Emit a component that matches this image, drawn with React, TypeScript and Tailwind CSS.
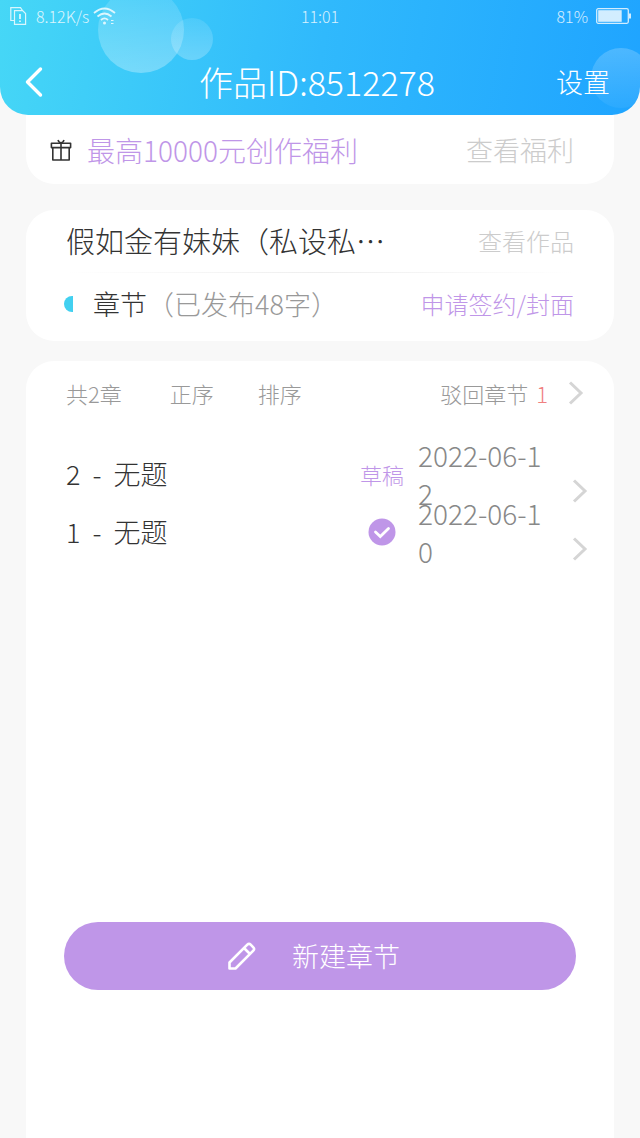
interface Chapter {
  id: number;
  title: string;
  date: string;
  draft: boolean;
}

const chapters: Array<Chapter> = [
  { id: 2, title: "无题", date: "2022-06-12", draft: true },
  { id: 1, title: "无题", date: "2022-06-10", draft: false },
];

const ChevronRight = () => (
  <svg className="h-6 w-4" viewBox="0 0 16 24" fill="none" aria-hidden="true">
    <path d="M2 1.5 L13 12 L2 22.5" stroke="#d5d5d5" strokeWidth="3" />
  </svg>
);

const GiftIcon = () => (
  <svg
    className="h-6 w-6"
    viewBox="0 0 24 24"
    fill="none"
    stroke="#333"
    strokeWidth="1.6"
    strokeLinejoin="round"
    aria-hidden="true"
  >
    <path d="M2.4 5.2 H21.6 V9.6 H2.4 Z" />
    <path d="M3.8 9.6 V22 H20.2 V9.6 M12 5 V22" />
    <path d="M9 2 Q10 4.8 12 4.8 Q14 4.8 15 2" />
  </svg>
);

const StatusBar = () => (
  <div className="grid grid-cols-3 items-center h-8 px-2 text-base opacity-80">
    <div className="flex items-center gap-1">
      <svg
        className="h-5 w-5"
        viewBox="0 0 20 20"
        fill="none"
        stroke="white"
        strokeWidth="1.2"
        aria-hidden="true"
      >
        <path d="M6 14.5 H2.8 V1.6 H12.5 L14.5 4.5" />
        <path d="M6.5 18.4 V4.6 H14.6 L17.6 7.6 V18.4 Z" />
        <path d="M12 8 V13 M12 14.4 V16" strokeWidth="1.8" />
      </svg>
      <span className="pl-1">8.12K/s</span>
      <svg
        className="h-5 w-6"
        viewBox="0 0 24 20"
        fill="none"
        stroke="white"
        strokeWidth="1.8"
        aria-hidden="true"
      >
        <path d="M1 7 Q11.5 -2 22 7 M4.5 10.5 Q11.5 4.5 18.5 10.5 M8 14 Q11.5 10.8 15 14" />
        <circle cx="11.5" cy="17" r="1.5" fill="white" stroke="none" />
        <path d="M18 14.5 H20.5 M18 17.5 H20.5" strokeWidth="1.2" />
      </svg>
    </div>
    <span className="text-center">11:01</span>
    <div className="flex items-center justify-end gap-2">
      <span>81%</span>
      <svg className="h-4 w-9" viewBox="0 0 36 16" fill="none" aria-hidden="true">
        <rect x="0.7" y="0.7" width="31.6" height="14.6" rx="1.5" stroke="white" strokeWidth="1.3" />
        <rect x="2.2" y="2.2" width="23.5" height="11.6" fill="white" />
        <path d="M34 5.5 V10.5" stroke="white" strokeWidth="2" />
      </svg>
    </div>
  </div>
);

const Header = () => (
  <header className="relative z-10 overflow-hidden rounded-b-[28px] bg-linear-100 from-[#46d7f6] via-[#30b9fc] to-[#1fa4ff] text-white">
    <div className="absolute left-[98px] -top-[13px] size-[86px] rounded-full bg-linear-to-b from-white/10 to-white/30" />
    <div className="absolute left-[171px] top-[18px] size-[42px] rounded-full bg-linear-to-b from-white/10 to-white/25" />
    <div className="absolute -right-[11px] top-12 size-[60px] rounded-full bg-linear-to-b from-white/20 to-white/5" />
    <div className="relative">
      <StatusBar />
      <div className="grid grid-cols-[1fr_auto_1fr] items-center h-[83px] pt-4 pl-6 pr-[30px]">
        <button aria-label="返回" className="justify-self-start">
          <svg className="h-8 w-5" viewBox="0 0 20 32" fill="none" aria-hidden="true">
            <path
              d="M16.5 3 L3.5 16 L16.5 29"
              stroke="white"
              strokeWidth="3.4"
              strokeLinecap="round"
              strokeLinejoin="round"
            />
          </svg>
        </button>
        <h1 className="text-[34px] leading-9">作品ID:8512278</h1>
        <button className="justify-self-end text-[27px] leading-9">设置</button>
      </div>
    </div>
  </header>
);

const ChapterRow = ({ id, title, date, draft }: Chapter) => (
  <li>
    <a href={`#chapter-${id}`} className="flex items-center h-[58px] pl-10 pr-[26px]">
      <span className="flex flex-1 gap-3 text-[27px] text-[#333]">
        <span>{id}</span>
        <span>-</span>
        <span>{title}</span>
      </span>
      <span className="flex justify-center w-12 text-[22px] text-[#bf96e8]">
        {draft ? (
          "草稿"
        ) : (
          <svg className="size-7" viewBox="0 0 28 28" fill="none" aria-label="已发布">
            <circle cx="14" cy="14" r="13.5" fill="#bf96e8" />
            <path
              d="M7.5 14 L12.3 18.5 L20.5 10.5"
              stroke="white"
              strokeWidth="2.8"
              strokeLinecap="round"
            />
          </svg>
        )}
      </span>
      <span className="w-[130px] ml-3 text-[28px] leading-[38px] break-all text-[#888]">
        {date}
      </span>
      <span className="self-end ml-6">
        <ChevronRight />
      </span>
    </a>
  </li>
);

export default function App() {
  return (
    <div className="flex flex-col min-h-screen bg-[#f8f8f8] font-['Noto_Sans_CJK_SC',sans-serif] font-light">
      <Header />
      <main className="flex flex-col flex-1 px-[26px]">
        <section className="flex items-center justify-between h-[97px] -mt-7 pt-7 pl-[23px] pr-10 rounded-b-[28px] bg-white text-[27px] leading-9">
          <div className="flex items-center gap-[14px] text-[28px] text-[#bf96e8]">
            <GiftIcon />
            <span>最高10000元创作福利</span>
          </div>
          <button className="text-[#ccc]">查看福利</button>
        </section>

        <section className="mt-[26px] pb-[6px] rounded-[28px] bg-white">
          <div className="flex items-center justify-between h-[62px] px-10">
            <h2 className="text-[29px] text-[#333]">假如金有妹妹（私设私…</h2>
            <button className="text-2xl text-[#ccc]">查看作品</button>
          </div>
          <div className="h-px mx-10 bg-linear-to-r from-transparent via-[#eee] to-transparent" />
          <div className="flex items-center justify-between h-[62px] pl-[38px] pr-10">
            <div className="flex items-center text-[27px]">
              <span className="w-[9px] h-4 rounded-l-full bg-[#42d0f0]" />
              <span className="ml-5 text-[#333]">章节</span>
              <span className="text-[#999]">（已发布48字）</span>
            </div>
            <button className="text-2xl text-[#bf96e8]">申请签约/封面</button>
          </div>
        </section>

        <section className="flex flex-col flex-1 mt-5 rounded-t-[28px] bg-white">
          <div className="flex items-center h-16 pl-10 pr-[30px] text-[22px] text-[#999]">
            <span>共2章</span>
            <button className="ml-12">正序</button>
            <button className="ml-11">排序</button>
            <a href="#rejected" className="flex items-center ml-auto">
              <span>驳回章节</span>
              <span className="ml-2 text-[#f08080]">1</span>
              <span className="ml-5">
                <ChevronRight />
              </span>
            </a>
          </div>
          <ul className="flex-1 pt-5">
            {chapters.map((chapter) => (
              <ChapterRow key={chapter.id} {...chapter} />
            ))}
          </ul>
          <button className="flex items-center justify-center gap-9 h-[68px] mx-[38px] mb-[148px] pr-3 rounded-full bg-[#bf96e8] text-[27px] text-white">
            <svg
              className="size-7"
              viewBox="0 0 28 28"
              fill="none"
              stroke="white"
              strokeWidth="2.6"
              strokeLinejoin="round"
              aria-hidden="true"
            >
              <path d="M1.5 26.5 V20.5 L19.3 2.7 Q21 1 22.7 2.7 L25.3 5.3 Q27 7 25.3 8.7 L7.5 26.5 Z M16 6 L22 12" />
            </svg>
            新建章节
          </button>
        </section>
      </main>
    </div>
  );
}
